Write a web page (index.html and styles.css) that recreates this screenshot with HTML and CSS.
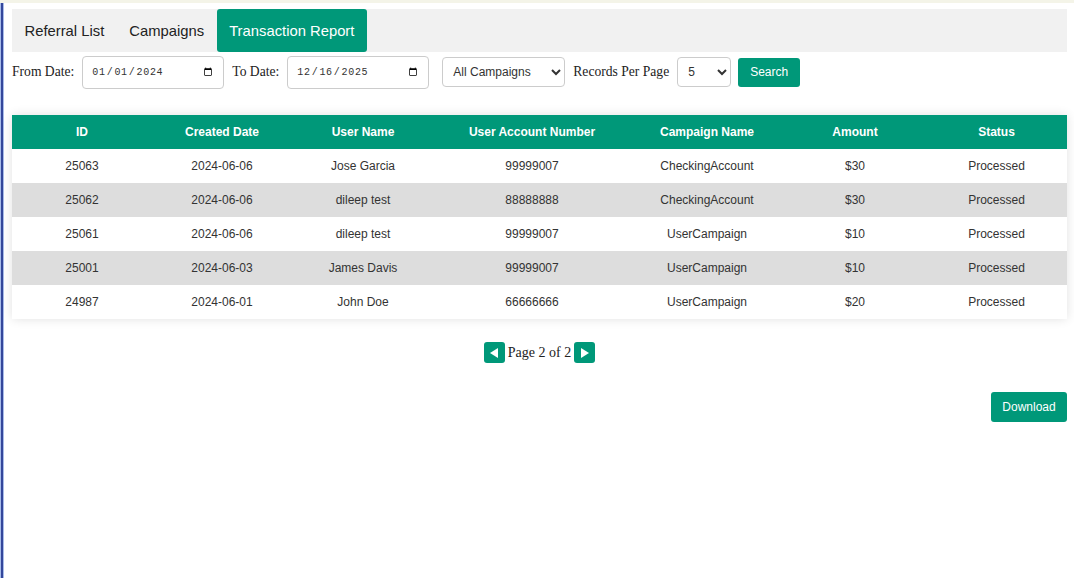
FILE: index.html
```html
<!DOCTYPE html>
<html lang="en">
<head>
    <meta charset="UTF-8">
    <meta name="viewport" content="width=device-width, initial-scale=1.0">
    <title>Transaction Report</title>
    <link rel="stylesheet" href="styles.css">
</head>
<body>
    <div class="page">
        <div class="tabs">
            <button class="tab">Referral List</button>
            <button class="tab">Campaigns</button>
            <button class="tab active">Transaction Report</button>
        </div>

        <div class="filters">
            <label>From Date:</label>
            <input type="date" class="date-input" value="2024-01-01">
            <label>To Date:</label>
            <input type="date" class="date-input" value="2025-12-16">
            <select class="campaign-select">
                <option>All Campaigns</option>
            </select>
            <label>Records Per Page</label>
            <select class="per-page">
                <option>5</option>
                <option>10</option>
            </select>
            <button class="btn search-btn">Search</button>
        </div>

        <table class="report">
            <thead>
                <tr>
                    <th class="c-id">ID</th>
                    <th class="c-date">Created Date</th>
                    <th class="c-user">User Name</th>
                    <th class="c-acct">User Account Number</th>
                    <th class="c-camp">Campaign Name</th>
                    <th class="c-amt">Amount</th>
                    <th class="c-status">Status</th>
                </tr>
            </thead>
            <tbody>
                <tr>
                    <td>25063</td><td>2024-06-06</td><td>Jose Garcia</td><td>99999007</td><td>CheckingAccount</td><td>$30</td><td>Processed</td>
                </tr>
                <tr>
                    <td>25062</td><td>2024-06-06</td><td>dileep test</td><td>88888888</td><td>CheckingAccount</td><td>$30</td><td>Processed</td>
                </tr>
                <tr>
                    <td>25061</td><td>2024-06-06</td><td>dileep test</td><td>99999007</td><td>UserCampaign</td><td>$10</td><td>Processed</td>
                </tr>
                <tr>
                    <td>25001</td><td>2024-06-03</td><td>James Davis</td><td>99999007</td><td>UserCampaign</td><td>$10</td><td>Processed</td>
                </tr>
                <tr>
                    <td>24987</td><td>2024-06-01</td><td>John Doe</td><td>66666666</td><td>UserCampaign</td><td>$20</td><td>Processed</td>
                </tr>
            </tbody>
        </table>

        <div class="pager">
            <button class="page-btn">
                <svg width="9" height="10" viewBox="0 0 9 10"><polygon points="8,0 8,10 0,5" fill="#fff"/></svg>
            </button>
            <span>Page 2 of 2</span>
            <button class="page-btn">
                <svg width="9" height="10" viewBox="0 0 9 10"><polygon points="1,0 1,10 9,5" fill="#fff"/></svg>
            </button>
        </div>

        <div class="actions">
            <button class="btn download-btn">Download</button>
        </div>
    </div>
</body>
</html>
```

FILE: styles.css
```css
html {
    background: linear-gradient(to right, #a9bce9 0 1px, #34479b 1px 3px, #a9bce9 3px 4px, #fff 4px);
}

body {
    margin: 0;
    min-height: 578px;
    border-top: 3px solid #f4f4e8;
    font-family: "Liberation Serif", serif;
    color: #222;
}

.page {
    padding: 6px 7px 0 12px;
}

.tabs {
    display: flex;
    background-color: #f1f1f1;
    height: 43px;
}

.tab {
    border: none;
    background: none;
    padding: 0 12.5px;
    font-family: "Liberation Sans", Arial, sans-serif;
    font-size: 14.8px;
    color: #222;
    border-radius: 3px;
    cursor: pointer;
}

.tab.active {
    background-color: #009879;
    color: #fff;
}

.filters {
    display: flex;
    align-items: center;
    height: 40px;
    font-size: 13.6px;
}

.filters label {
    margin-right: 8px;
}

.date-input {
    box-sizing: border-box;
    width: 142px;
    height: 33px;
    margin-right: 8px;
    padding: 0 8px;
    border: 1px solid #ccc;
    border-radius: 4px;
    font-family: "Liberation Mono", monospace;
    font-size: 10px;
    letter-spacing: 0.7px;
    color: #333;
    background: #fff;
}

.campaign-select {
    box-sizing: border-box;
    width: 123px;
    height: 30px;
    margin: 0 8px 0 5px;
    padding: 0 6px;
    border: 1px solid #ccc;
    border-radius: 4px;
    font-family: "Liberation Sans", Arial, sans-serif;
    font-size: 12px;
    color: #333;
    background: #fff;
}

.per-page {
    box-sizing: border-box;
    width: 54px;
    height: 30px;
    margin-right: 7px;
    padding: 0 6px;
    border: 1px solid #ccc;
    border-radius: 4px;
    font-family: "Liberation Sans", Arial, sans-serif;
    font-size: 12px;
    color: #333;
    background: #fff;
}

.btn {
    border: none;
    border-radius: 3px;
    background-color: #009879;
    color: #fff;
    font-family: "Liberation Sans", Arial, sans-serif;
    font-size: 12px;
    cursor: pointer;
}

.search-btn {
    width: 62px;
    height: 29px;
}

.report {
    width: 100%;
    margin-top: 23px;
    border-collapse: collapse;
    table-layout: fixed;
    font-family: "Liberation Sans", Arial, sans-serif;
    font-size: 12px;
    box-shadow: 0 0 10px rgba(0, 0, 0, 0.12);
}

.report th {
    background-color: #009879;
    color: #fff;
    font-weight: bold;
    height: 34px;
    padding: 0;
}

.report td {
    height: 34px;
    padding: 0;
    text-align: center;
    color: #333;
}

.report tbody tr:nth-child(even) {
    background-color: #dddddd;
}

.c-id { width: 140px; }
.c-date { width: 140px; }
.c-user { width: 142px; }
.c-acct { width: 196px; }
.c-camp { width: 154px; }
.c-amt { width: 142px; }

.pager {
    display: flex;
    justify-content: center;
    align-items: center;
    gap: 3px;
    margin-top: 23px;
    font-size: 14px;
    color: #222;
}

.page-btn {
    display: flex;
    align-items: center;
    justify-content: center;
    width: 21px;
    height: 21px;
    padding: 0;
    border: none;
    border-radius: 3px;
    background-color: #009879;
    cursor: pointer;
}

.actions {
    display: flex;
    justify-content: flex-end;
    margin-top: 29px;
}

.download-btn {
    width: 76px;
    height: 30px;
}
```
